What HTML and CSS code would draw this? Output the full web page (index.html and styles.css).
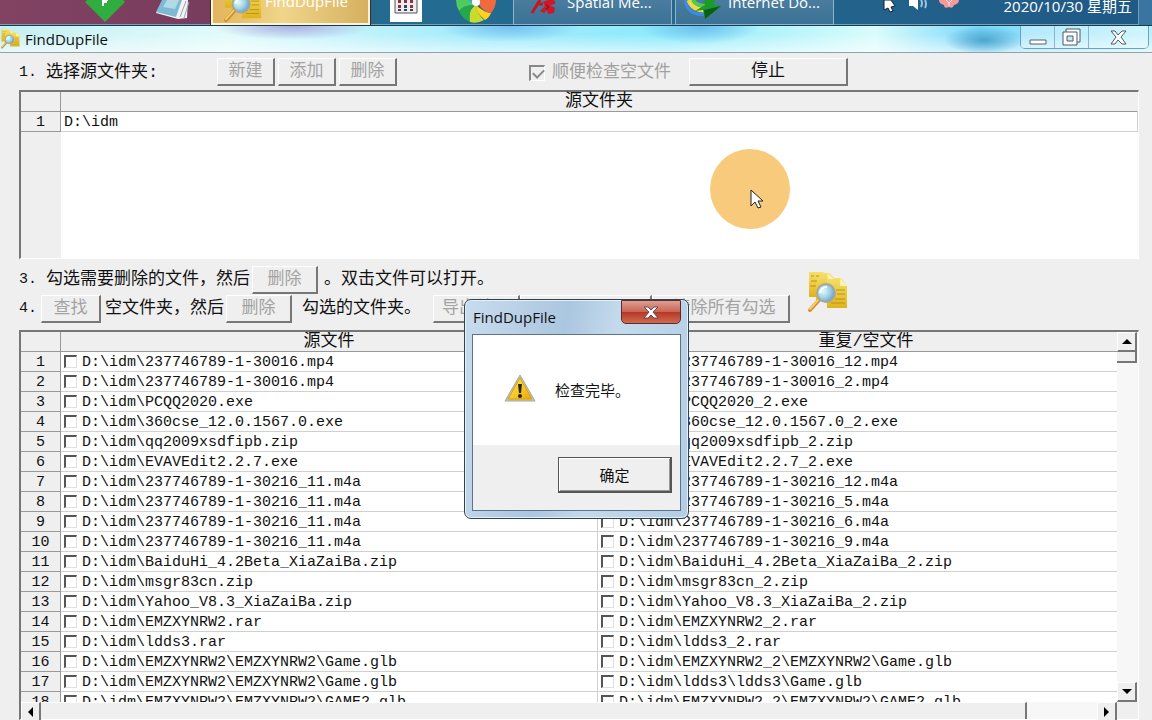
FILE: index.html
```
<!DOCTYPE html>
<html lang="zh-CN">
<head>
<meta charset="utf-8">
<title>FindDupFile</title>
<link rel="stylesheet" href="styles.css">
</head>
<body>
<svg class="defs" aria-hidden="true">
  <defs>
    <linearGradient id="gold" x1="0" y1="0" x2="0" y2="1"><stop offset="0" stop-color="#f5df6a"/><stop offset="1" stop-color="#dfb41c"/></linearGradient>
    <radialGradient id="lens" cx=".35" cy=".4" r=".7"><stop offset="0" stop-color="#e2fbf2"/><stop offset=".55" stop-color="#9ed0e6"/><stop offset="1" stop-color="#5d98c8"/></radialGradient>
    <linearGradient id="warn" x1="0" y1="0" x2="1" y2="1"><stop offset="0" stop-color="#fff25a"/><stop offset="1" stop-color="#f0a400"/></linearGradient>
    <symbol id="finder" viewBox="0 0 42 42">
      <path d="M2 1h14l4 4v21H2z" fill="url(#gold)"/>
      <path d="M9 2h13l6 6v22H9z" fill="url(#gold)"/>
      <path d="M20 7h14l6 8v22H20z" fill="url(#gold)"/>
      <path d="M33 7l7 8h-7zM20 2l7 6h-6z" fill="#fbf3b0"/>
      <path d="M4 5h3M9 5h3M4 10h6M3 15h6M29 19h9M30 23h8M28 28h10M24 32h14" stroke="#bd920f" fill="none"/>
      <path d="M12 29L3 39" stroke="#d08f2a" stroke-width="4" stroke-linecap="round"/>
      <path d="M11 29L3 38" stroke="#f4cd70" stroke-width="2" stroke-linecap="round"/>
      <circle cx="19" cy="22" r="9" fill="url(#lens)" stroke="#a5a79a" stroke-width="2"/>
      <path d="M13 22q1-6 7-6" stroke="#fff" stroke-width="2" fill="none"/>
    </symbol>
  </defs>
</svg>

<header class="taskbar">
  <div class="pinned">
    <svg class="pin-diamond" viewBox="0 0 40 22"><path d="M0 2L2 0h36l2 2-20 20z" fill="#2fae3f"/><path d="M18 6V0h5M18 2h4" stroke="#fff" stroke-width="2" fill="none"/></svg>
    <svg class="pin-note" viewBox="0 0 36 20"><path d="M8 0h25l-1 18-9 1-22-6z" fill="#f1f4f4"/><path d="M7 0h20l-6 17L1 12z" fill="#7db9d2"/><path d="M12 0h12l-4 9-12-2z" fill="#b1d9e6"/><path d="M31 1l-6 16M34 2l-5 16" stroke="#9ba7ad" fill="none"/></svg>
  </div>
  <button class="task task-active"><svg class="task-icon-lg"><use href="#finder"/></svg><span>FindDupFile</span></button>
  <div class="pinned pinned-mid">
    <svg class="pin-cal" viewBox="0 0 32 22"><path d="M0 0h32v22H0z" fill="#fff"/><path d="M5 -2h22v15H5z" fill="#eee" stroke="#555"/><g fill="#8c3340"><path d="M8 0h3v3H8zM14 0h3v3h-3zM20 0h3v3h-3zM8 5h3v3H8zM20 5h3v3h-3z"/></g><path d="M14 5h3v3h-3zM8 9h3v2H8zM14 9h3v2h-3zM20 9h3v2h-3z" fill="#37435c"/></svg>
    <svg class="pin-wheel" viewBox="0 0 40 23"><path d="M0 0h16l2 5Q8 6 3 11 0 6 0 0z" fill="#4fcb62"/><path d="M3 11Q8 4 18 5q-6 6-4 17Q6 19 3 11z" fill="#25a84c"/><path d="M14 22Q12 9 20 5q1 9 8 15-7 4-14 2z" fill="#c6dc2e"/><path d="M20 5q0 8 9 15 4-2 6-7Q27 12 20 5z" fill="#ffd21f"/><path d="M22 3q5 9 13 10 5-6 5-13H23z" fill="#ef6a3c"/><path d="M12 0h10l-2 6z" fill="#4c9ee8"/><circle cx="20" cy="2" r="4" fill="#fff"/></svg>
  </div>
  <button class="task"><svg class="task-icon" viewBox="0 0 30 14"><path d="M11 0L3 13M7 4h7" stroke="#c91523" stroke-width="3" fill="none"/><path d="M14 2q8-4 12-1v3l-5 1 5 3-1 5-6 1-1-4-3 3-4-2 5-5z" fill="#d11725"/><path d="M17 5l3 2-3 2" stroke="#5d1b31" fill="none"/></svg><span>Spatial Me...</span></button>
  <button class="task task-idm"><svg class="task-icon-lg" viewBox="0 0 42 20"><path d="M1 0q3 16 21 14" stroke="#3a8bea" stroke-width="3" fill="none"/><path d="M5 0q4 11 18 10" stroke="#f0dc42" stroke-width="5" fill="none"/><path d="M9 0q3 6 14 6" stroke="#55c553" stroke-width="4" fill="none"/><path d="M20 0h11l-1 5 8 1-17 13-2-9-8 1 10-6z" fill="#1b9b2c"/><path d="M20 10l17-4-16 13z" fill="#0b5e1a"/></svg><span>Internet Do...</span></button>
  <div class="tray">
    <svg class="tray-icons" viewBox="0 0 80 13"><path d="M3 0h7l4 6-4 1 2 4-3 1-2-4-4 2z" fill="#fff" stroke="#123" stroke-width="1"/><path d="M28 0h4l5-1v11l-5-4h-4z" fill="#fff"/><path d="M40 0q2 3 0 7M44 0q2 4 0 8" stroke="#9dc3dc" stroke-width="2" fill="none"/><path d="M58 0h20q0 4-5 5-1 4-5 2-5 2-5-2-5-1-5-5z" fill="#f49a9c"/><path d="M65 0l3 3 3-3M68 3v3" stroke="#fde3e3" fill="none"/></svg>
    <time>2020/10/30 星期五</time>
    <span class="peek"></span>
  </div>
</header>

<div class="titlebar">
  <svg class="title-icon"><use href="#finder"/></svg>
  <h1>FindDupFile</h1>
  <div class="captions">
    <button aria-label="最小化"><svg width="18" height="16" viewBox="0 0 18 16"><path d="M1 11h16v4H1z" fill="#fff" stroke="#56616e"/></svg></button>
    <button aria-label="还原"><svg width="20" height="18" viewBox="0 0 20 18"><path d="M4 1h14v13H4z" fill="#fff" stroke="#4d5968"/><path d="M1 4h14v13H1z" fill="#fff" stroke="#4d5968"/><path d="M5 8h6v5H5z" fill="#cde8f4" stroke="#4d5968"/></svg></button>
    <button class="cap-close" aria-label="关闭"><svg width="17" height="15" viewBox="0 0 17 15"><path d="M1 1h4l3 4 4-4h4l-5 6 5 7h-4l-4-4-3 4H1l5-7z" fill="#fff" stroke="#4d5968"/></svg></button>
  </div>
</div>

<main class="window">
  <div class="row row-source">
    <span class="num">1.</span>
    <span class="label label-source">选择源文件夹:</span>
    <button class="btn btn-sm" disabled>新建</button>
    <button class="btn btn-sm" disabled>添加</button>
    <button class="btn btn-sm" disabled>删除</button>
    <label class="check-empty"><input type="checkbox" class="tick tick-off" checked disabled><span>顺便检查空文件</span></label>
    <button class="btn btn-stop">停止</button>
  </div>

  <div class="grid-frame grid-source">
    <table class="grid">
      <colgroup><col class="c-num"><col></colgroup>
      <thead><tr><th></th><th>源文件夹</th></tr></thead>
      <tbody><tr><th>1</th><td>D:\idm</td></tr></tbody>
    </table>
  </div>

  <div class="tools">
    <div class="tool-rows">
      <div class="row">
        <span class="num">3.</span>
        <span class="label">勾选需要删除的文件，然后</span>
        <button class="btn btn-md" disabled>删除</button>
        <span class="label label-open">。双击文件可以打开。</span>
      </div>
      <div class="row row-find">
        <span class="num num-tight">4.</span>
        <button class="btn btn-find" disabled>查找</button>
        <span class="label">空文件夹，然后</span>
        <button class="btn btn-md" disabled>删除</button>
        <span class="label label-picked">勾选的文件夹。</span>
        <span class="batch">
          <button class="btn btn-export" disabled>导出结果</button>
          <button class="btn btn-import" disabled aria-label="导入"></button>
          <button class="btn btn-clear" disabled>清除所有勾选</button>
        </span>
      </div>
    </div>
    <svg class="app-icon"><use href="#finder"/></svg>
  </div>

  <div class="grid-frame grid-results">
    <div class="pane">
      <table class="grid grid-wide">
        <colgroup><col class="c-num"><col><col></colgroup>
        <thead><tr><th></th><th>源文件</th><th>重复/空文件</th></tr></thead>
        <tbody>
          <tr><th>1</th><td><label><input type="checkbox" class="tick">D:\idm\237746789-1-30016.mp4</label></td><td><label><input type="checkbox" class="tick">D:\idm\237746789-1-30016_12.mp4</label></td></tr>
          <tr><th>2</th><td><label><input type="checkbox" class="tick">D:\idm\237746789-1-30016.mp4</label></td><td><label><input type="checkbox" class="tick">D:\idm\237746789-1-30016_2.mp4</label></td></tr>
          <tr><th>3</th><td><label><input type="checkbox" class="tick">D:\idm\PCQQ2020.exe</label></td><td><label><input type="checkbox" class="tick">D:\idm\PCQQ2020_2.exe</label></td></tr>
          <tr><th>4</th><td><label><input type="checkbox" class="tick">D:\idm\360cse_12.0.1567.0.exe</label></td><td><label><input type="checkbox" class="tick">D:\idm\360cse_12.0.1567.0_2.exe</label></td></tr>
          <tr><th>5</th><td><label><input type="checkbox" class="tick">D:\idm\qq2009xsdfipb.zip</label></td><td><label><input type="checkbox" class="tick">D:\idm\qq2009xsdfipb_2.zip</label></td></tr>
          <tr><th>6</th><td><label><input type="checkbox" class="tick">D:\idm\EVAVEdit2.2.7.exe</label></td><td><label><input type="checkbox" class="tick">D:\idm\EVAVEdit2.2.7_2.exe</label></td></tr>
          <tr><th>7</th><td><label><input type="checkbox" class="tick">D:\idm\237746789-1-30216_11.m4a</label></td><td><label><input type="checkbox" class="tick">D:\idm\237746789-1-30216_12.m4a</label></td></tr>
          <tr><th>8</th><td><label><input type="checkbox" class="tick">D:\idm\237746789-1-30216_11.m4a</label></td><td><label><input type="checkbox" class="tick">D:\idm\237746789-1-30216_5.m4a</label></td></tr>
          <tr><th>9</th><td><label><input type="checkbox" class="tick">D:\idm\237746789-1-30216_11.m4a</label></td><td><label><input type="checkbox" class="tick">D:\idm\237746789-1-30216_6.m4a</label></td></tr>
          <tr><th>10</th><td><label><input type="checkbox" class="tick">D:\idm\237746789-1-30216_11.m4a</label></td><td><label><input type="checkbox" class="tick">D:\idm\237746789-1-30216_9.m4a</label></td></tr>
          <tr><th>11</th><td><label><input type="checkbox" class="tick">D:\idm\BaiduHi_4.2Beta_XiaZaiBa.zip</label></td><td><label><input type="checkbox" class="tick">D:\idm\BaiduHi_4.2Beta_XiaZaiBa_2.zip</label></td></tr>
          <tr><th>12</th><td><label><input type="checkbox" class="tick">D:\idm\msgr83cn.zip</label></td><td><label><input type="checkbox" class="tick">D:\idm\msgr83cn_2.zip</label></td></tr>
          <tr><th>13</th><td><label><input type="checkbox" class="tick">D:\idm\Yahoo_V8.3_XiaZaiBa.zip</label></td><td><label><input type="checkbox" class="tick">D:\idm\Yahoo_V8.3_XiaZaiBa_2.zip</label></td></tr>
          <tr><th>14</th><td><label><input type="checkbox" class="tick">D:\idm\EMZXYNRW2.rar</label></td><td><label><input type="checkbox" class="tick">D:\idm\EMZXYNRW2_2.rar</label></td></tr>
          <tr><th>15</th><td><label><input type="checkbox" class="tick">D:\idm\ldds3.rar</label></td><td><label><input type="checkbox" class="tick">D:\idm\ldds3_2.rar</label></td></tr>
          <tr><th>16</th><td><label><input type="checkbox" class="tick">D:\idm\EMZXYNRW2\EMZXYNRW2\Game.glb</label></td><td><label><input type="checkbox" class="tick">D:\idm\EMZXYNRW2_2\EMZXYNRW2\Game.glb</label></td></tr>
          <tr><th>17</th><td><label><input type="checkbox" class="tick">D:\idm\EMZXYNRW2\EMZXYNRW2\Game.glb</label></td><td><label><input type="checkbox" class="tick">D:\idm\ldds3\ldds3\Game.glb</label></td></tr>
          <tr><th>18</th><td><label><input type="checkbox" class="tick">D:\idm\EMZXYNRW2\EMZXYNRW2\GAME2.glb</label></td><td><label><input type="checkbox" class="tick">D:\idm\EMZXYNRW2_2\EMZXYNRW2\GAME2.glb</label></td></tr>
        </tbody>
      </table>
    </div>
    <div class="vbar">
      <button class="bar-btn" aria-label="向上"><svg width="10" height="5" viewBox="0 0 10 5"><path d="M0 5l5-5 5 5z"/></svg></button>
      <span class="vthumb"></span>
      <button class="bar-btn bar-end" aria-label="向下"><svg width="10" height="5" viewBox="0 0 10 5"><path d="M0 0h10L5 5z"/></svg></button>
    </div>
    <div class="hbar">
      <button class="bar-btn" aria-label="向左"><svg width="5" height="10" viewBox="0 0 5 10"><path d="M5 0v10L0 5z"/></svg></button>
      <span class="hthumb"></span>
      <button class="bar-btn bar-right" aria-label="向右"><svg width="5" height="10" viewBox="0 0 5 10"><path d="M0 0l5 5-5 5z"/></svg></button>
    </div>
    <span class="corner"></span>
  </div>
</main>

<div class="pointer">
  <svg width="13" height="20" viewBox="0 0 13 20"><path d="M1 1v16l4-4 3 6 3-1-3-6h5z" fill="#fff" stroke="#222"/></svg>
</div>

<div class="dialog" role="dialog" aria-labelledby="dlg-title">
  <div class="dialog-head">
    <h2 id="dlg-title">FindDupFile</h2>
    <button class="dialog-close" aria-label="关闭"><svg width="16" height="13" viewBox="0 0 16 13"><path d="M1 1h4l3 3 3-3h4l-5 5 5 6h-4L8 9l-3 3H1l5-6z" fill="#fff" stroke="#6b4a50"/></svg></button>
  </div>
  <div class="dialog-body">
    <div class="message">
      <svg width="32" height="28" viewBox="0 0 32 28"><path d="M16 1L31 27H1z" fill="#c3c3b5" stroke="#a9a99d" stroke-linejoin="round"/><path d="M16 4l12 21H4z" fill="url(#warn)" stroke="#d9a300"/><path d="M14 10h4l-1 9h-2z" fill="#2a2408"/><circle cx="16" cy="22" r="2" fill="#2a2408"/></svg>
      <p>检查完毕。</p>
    </div>
    <div class="actions"><button class="btn-ok">确定</button></div>
  </div>
</div>
</body>
</html>
```

FILE: styles.css
```
* { box-sizing: border-box; }

body {
  margin: 0;
  height: 100vh;
  overflow: hidden;
  display: flex;
  flex-direction: column;
  background: #efefef;
  color: #111;
  font: 17px/20px "Liberation Mono", "Noto Sans CJK SC", monospace;
}

button { font: inherit; color: inherit; margin: 0; padding: 0; }
h1, h2, p { margin: 0; font-weight: normal; }
svg { display: block; flex: none; }
.defs { position: absolute; width: 0; height: 0; }

/* Taskbar */
.taskbar {
  flex: none;
  height: 26px;
  display: flex;
  align-items: flex-start;
  overflow: hidden;
  border-bottom: 1px solid #153c57;
  box-shadow: inset 0 -1px #7aa0b5;
  background: linear-gradient(90deg, #824363 0, #783c5c 18%, #236b90 33%, #256a91 55%, #1f5985 100%);
  font: 15px/20px "Open Sans", "Noto Sans CJK SC", sans-serif;
  color: #fff;
}
.pinned { display: flex; gap: 30px; width: 211px; padding-left: 85px; }
.pinned-mid { width: 143px; gap: 34px; padding-left: 20px; }
.pin-diamond { width: 40px; height: 22px; }
.pin-note { width: 36px; height: 20px; }
.pin-cal { width: 32px; height: 22px; }
.pin-wheel { width: 40px; height: 23px; }
.task {
  display: flex;
  align-items: flex-end;
  gap: 8px;
  width: 159px;
  height: 25px;
  margin-right: 3px;
  padding: 0 0 12px 10px;
  border: 1px solid #8db4c8;
  border-top: 0;
  background: linear-gradient(#4a7c9f, #3b7295);
  white-space: nowrap;
}
.task-idm { gap: 2px; padding-left: 8px; }
.task-active {
  margin-right: 0;
  gap: 2px;
  border: 2px solid #fbf4d6;
  border-top: 0;
  outline: 1px solid #3d2a2c;
  background: linear-gradient(90deg, #e2b45c, #f0d58a 45%, #d6b060);
}
.task-icon { width: 30px; height: 14px; align-self: flex-start; margin-left: 5px; }
.task-icon-lg { width: 42px; height: 20px; align-self: flex-start; }
.task-active .task-icon-lg { width: 40px; height: 40px; margin-top: -17px; }
.tray { flex: 1; display: flex; justify-content: flex-end; padding-left: 44px; }
.tray-icons { width: 80px; height: 13px; margin-right: auto; }
.tray time { margin: -4px 6px 0 0; white-space: nowrap; }
.peek { width: 14px; height: 25px; border-left: 1px solid #6d9cbe; background: #3a74a0; }

/* Window caption */
.titlebar {
  flex: none;
  height: 27px;
  display: flex;
  align-items: center;
  border-bottom: 1px solid #8fa3ad;
  background:
    radial-gradient(ellipse 80px 14px at 292px 0, #a9abdf, transparent),
    radial-gradient(ellipse 70px 16px at 510px 0, #74bdf0, transparent),
    radial-gradient(ellipse 60px 18px at 700px 0, #68bdec, transparent),
    radial-gradient(ellipse 40px 14px at 984px 14px, #4ba5cf, transparent),
    linear-gradient(transparent 30%, rgba(255, 255, 255, .6)),
    linear-gradient(90deg, #c5eff2, #e2fbfb 20%, #a5ecfb 40%, #8ceafb 58%, #d9fcfb 76%, #7bd8fa 85%, #b8f1fa);
}
.title-icon { width: 21px; height: 20px; }
h1, h2 { font: 15px/20px "Open Sans", "Noto Sans CJK SC", sans-serif; }
h1 { margin-left: 4px; }
.captions {
  align-self: flex-start;
  display: flex;
  height: 23px;
  margin: 0 3px 0 auto;
  border: 1px solid #6fa2b8;
  border-top: 0;
  border-radius: 0 0 5px 5px;
}
.captions button {
  width: 34px;
  display: grid;
  place-items: center;
  border: 0;
  border-right: 1px solid #8bb5c6;
  background: rgba(255, 255, 255, .35);
}
.captions .cap-close { width: 59px; border-right: 0; }

/* Controls */
.window { flex: 1; min-height: 0; display: flex; flex-direction: column; padding: 5px 13px 0 19px; }
.row { display: flex; align-items: center; height: 28px; white-space: nowrap; }
.num { width: 27px; font-size: 15px; }
.num-tight { width: 22px; }
.btn {
  height: 28px;
  border: 1px solid #fff;
  border-right: 2px solid #777;
  border-bottom: 2px solid #777;
  background: #efefef;
}
.btn:disabled { color: #a3a3a3; }
.row-source .num, .row-source .label, .check-empty { padding-top: 2px; }
.label-source { width: 171px; }
.btn-sm { width: 58px; margin-right: 3px; }
.check-empty { display: flex; align-items: center; gap: 7px; margin: 0 18px 0 129px; color: #a0a0a0; }
.btn-stop { width: 159px; }
.btn-md { width: 66px; margin-left: 2px; }
.label-open { margin-left: 6px; }
.btn-find { width: 60px; margin-right: 4px; }
.label-picked { margin-left: 10px; }
.batch { display: flex; margin-left: 12px; }
.btn-export { width: 87px; }
.btn-import { width: 132px; }
.btn-clear { width: 138px; padding-left: 8px; }

.tick {
  appearance: none;
  flex: none;
  width: 13px;
  height: 13px;
  margin: 0;
  border: 1px solid #e0e0e0;
  border-top: 2px solid #555;
  border-left: 2px solid #555;
  background: #fff;
}
.tick-off { width: 16px; height: 16px; background: #efefef; border-top-color: #888; border-left-color: #888; border-right-color: #fff; border-bottom-color: #fff; }
.tick-off:checked::after {
  content: "";
  display: block;
  width: 9px;
  height: 5px;
  margin: 2px 0 0 2px;
  border: solid #888;
  border-width: 0 0 2px 2px;
  transform: rotate(-45deg);
}

.tools { flex: none; display: flex; align-items: center; height: 71px; gap: 17px; }
.tool-rows { display: flex; flex-direction: column; gap: 1px; }
.app-icon { width: 42px; height: 42px; margin-bottom: 6px; }

/* Grids */
.grid-frame { border: 1px solid #fff; border-top: 2px solid #777; border-left: 2px solid #777; }
.grid-source {
  flex: none;
  height: 169px;
  margin-top: 4px;
  background: linear-gradient(90deg, #efefef 40px, #fff 40px);
}
.grid { width: 100%; border-collapse: separate; border-spacing: 0; table-layout: fixed; font-size: 15px; line-height: 16px; }
.c-num { width: 40px; }
.grid th, .grid td { height: 20px; padding: 3px 0 0; font-weight: normal; white-space: nowrap; border-right: 1px solid #d0d0d0; border-bottom: 1px solid #d0d0d0; }
.grid th { background: #efefef; border-color: #999; }
.grid thead th { padding: 0; font-size: 17px; line-height: 19px; }
.grid thead th:not(:first-child) { border-right-color: #efefef; }
.grid td { padding-left: 3px; background: #fff; }
.grid label { display: flex; align-items: flex-start; gap: 5px; }

.grid-results {
  flex: 1;
  min-height: 0;
  display: grid;
  grid-template-columns: minmax(0, 1fr) 21px;
  grid-template-rows: minmax(0, 1fr) 17px;
}
.pane { overflow: hidden; background: #fff; }
.grid-wide { width: calc(100% + 18px); }
.vbar, .hbar { display: flex; background: #f7f7f7; }
.vbar { flex-direction: column; }
.bar-btn {
  flex: none;
  width: 20px;
  height: 20px;
  display: grid;
  place-items: center;
  border: 1px solid #fff;
  border-right: 2px solid #777;
  border-bottom: 2px solid #777;
  background: #efefef;
}
.bar-end { margin-top: auto; }
.bar-right { margin-left: auto; }
.vthumb { width: 20px; height: 11px; border-right: 2px solid #777; border-bottom: 2px solid #777; background: #efefef; }
.hthumb { width: 90%; border-top: 1px solid #fff; border-right: 2px solid #777; background: #efefef; }
.corner { background: #efefef; }

/* Click highlight and cursor */
.pointer {
  position: absolute;
  left: 710px;
  top: 149px;
  width: 80px;
  height: 80px;
  padding: 40px 0 0 40px;
  border-radius: 50%;
  background: #f8ca7c;
}

/* Message box */
.dialog {
  position: absolute;
  left: 464px;
  top: 299px;
  width: 225px;
  height: 220px;
  display: flex;
  flex-direction: column;
  padding: 0 7px 7px;
  border: 1px solid #34414f;
  border-radius: 7px;
  box-shadow: inset 0 0 0 1px #e3f0fa;
  background: linear-gradient(100deg, #c9dcee, #abc6df 40%, #c4daec 60%, #b3cde4);
}
.dialog-head { display: flex; justify-content: space-between; height: 34px; padding-left: 1px; }
.dialog-head h2 { padding-top: 7px; }
.dialog-close {
  width: 60px;
  height: 24px;
  display: grid;
  place-items: center;
  border: 1px solid #5f2a2c;
  border-radius: 0 0 5px 5px;
  background: linear-gradient(#dba094, #cb6655 48%, #b53a26 52%, #cf6a50);
}
.dialog-body { flex: 1; display: flex; flex-direction: column; border: 1px solid #5d7389; background: #fff; font: 15px/20px "Noto Sans CJK SC", sans-serif; }
.message { flex: 1; display: flex; align-items: center; gap: 19px; padding: 0 0 4px 31px; }
.message p { padding-top: 4px; }
.actions { display: flex; justify-content: flex-end; padding: 12px 8px 17px; background: #efefef; }
.btn-ok {
  width: 114px;
  height: 36px;
  border: 1px solid #555;
  border-right-width: 2px;
  border-bottom-width: 2px;
  box-shadow: inset 1px 1px #fff, inset -1px -1px #999;
  background: #efefef;
}
```
